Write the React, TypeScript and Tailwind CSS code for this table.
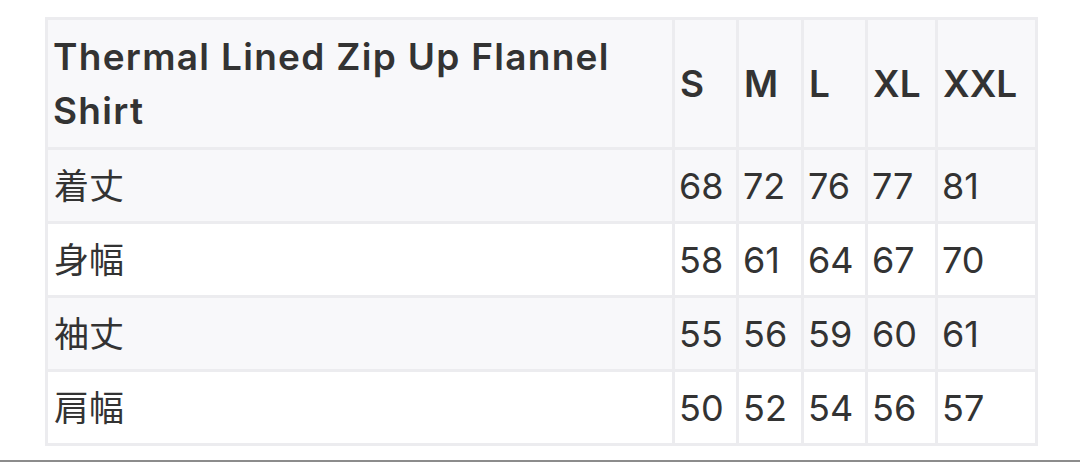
import React from "react";

const sizes = ["S", "M", "L", "XL", "XXL"];

const rows: { label: string; values: number[] }[] = [
  { label: "着丈", values: [68, 72, 76, 77, 81] },
  { label: "身幅", values: [58, 61, 64, 67, 70] },
  { label: "袖丈", values: [55, 56, 59, 60, 61] },
  { label: "肩幅", values: [50, 52, 54, 56, 57] },
];

const App: React.FC = () => {
  return (
    <div
      className="w-[1080px] h-[462px] bg-white text-[#333333] flex flex-col"
      style={{ fontFamily: 'Inter, "Noto Sans CJK JP", sans-serif' }}
    >
      <div className="flex-1 pt-[17px] pl-[45px]">
        <table className="table-fixed border-collapse w-[990px] text-[36px] leading-[52px]">
          <colgroup>
            <col className="w-[627px]" />
            <col className="w-[64px]" />
            <col className="w-[65px]" />
            <col className="w-[64px]" />
            <col className="w-[70px]" />
            <col className="w-[100px]" />
          </colgroup>
          <thead>
            <tr className="h-[130px] bg-[#f8f8fa] text-[37px] leading-[54px]">
              <th className="border-[3px] border-[#ececef] pl-[5px] pr-2 text-left font-semibold tracking-[0.035em]">
                Thermal Lined Zip Up Flannel Shirt
              </th>
              {sizes.map((s) => (
                <th
                  key={s}
                  className="border-[3px] border-[#ececef] pl-[5px] text-left font-semibold whitespace-nowrap"
                >
                  {s}
                </th>
              ))}
            </tr>
          </thead>
          <tbody>
            {rows.map((r, i) => (
              <tr
                key={r.label}
                className={`h-[74px] ${i % 2 === 0 ? "bg-[#f8f8fa]" : "bg-white"}`}
              >
                <td className="border-[3px] border-[#ececef] pl-[6px] font-normal text-[35px]">
                  {r.label}
                </td>
                {r.values.map((v, j) => (
                  <td
                    key={j}
                    className="border-[3px] border-[#ececef] pl-[4px] font-normal whitespace-nowrap"
                  >
                    {v}
                  </td>
                ))}
              </tr>
            ))}
          </tbody>
        </table>
      </div>
      <div className="h-[2px] bg-[#8c8c8c]" />
    </div>
  );
};

export default App;
